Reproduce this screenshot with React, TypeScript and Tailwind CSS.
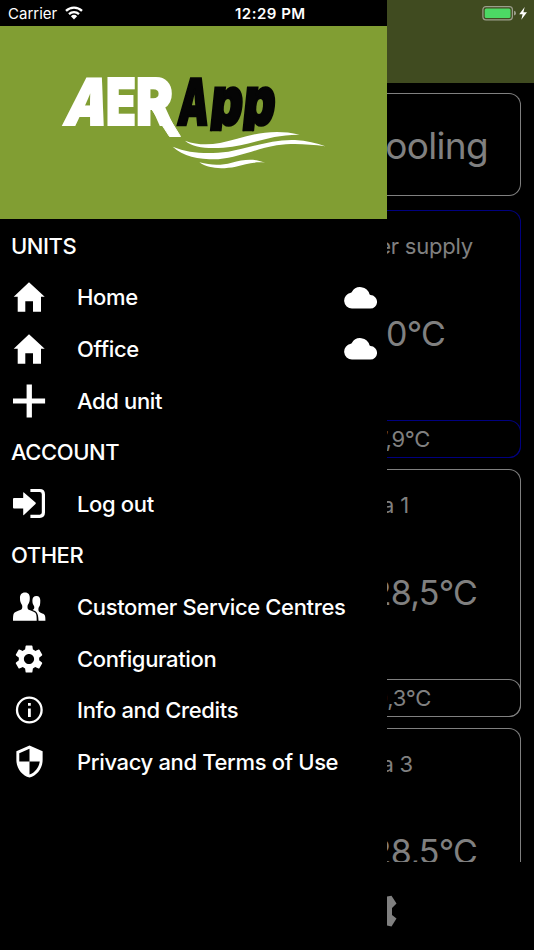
import type { ReactNode } from "react";
import { MdSecurity, MdSettings } from "react-icons/md";

const HomeIcon = () => (
  <svg viewBox="0 0 36 36" className="w-9 h-9" fill="currentColor">
    <path d="M18 3.3 33.7 17.7H30v15.1h-8V22.2h-7.7v10.6H6.7V17.7h-4z" />
  </svg>
);

const PlusIcon = () => (
  <svg viewBox="0 0 36 36" className="w-9 h-9" fill="currentColor">
    <path d="M15.6 1.4h5.3v14h13.2v5.1H20.9v13.9h-5.3V20.5H2v-5.1h13.6z" />
  </svg>
);

const LogoutIcon = () => (
  <svg viewBox="0 0 36 36" className="w-9 h-9" fill="currentColor">
    <path d="M3 11.9h9.2V6.6q0-.8.7-.2l11.6 10.2q.7.7 0 1.4L12.9 29q-.7.5-.7-.3v-6.3H3q-1 0-1-1v-8.5q0-1 1-1z" />
    <path d="M19.4 4.5h9.3q3.7 0 3.7 3.7v18.4q0 3.7-3.7 3.7h-9.3" fill="none" stroke="currentColor" strokeWidth="3.2" />
  </svg>
);

const PeopleIcon = () => (
  <svg viewBox="0 0 36 36" className="w-9 h-9" fill="currentColor">
    <path d="M14 3.5c-3.5 0-5.2 2.4-5 5.7.1 1.8 0 2.3.5 3.8.5 1.7 1.8 2.7 1.8 4.4 0 2-.3 2.9-2 3.7-1.8.8-4.7 1.5-6 2.7C2 25 2 28.5 2 31.7h23.7c0-3.2 0-6.7-1.4-7.9-1.3-1.2-4.2-1.9-6-2.7-1.6-.8-1.8-1.7-1.8-3.7 0-1.7 1.3-2.7 1.8-4.4.5-1.5.4-2 .5-3.8.2-3.3-1.4-5.7-4.8-5.7z" />
    <path d="M25.5 7c-2.8 0-4.2 1.8-4.1 4.6.1 1.5 0 2 .5 3.3.4 1.2 1.4 1.9 1.4 3.3 0 1.5-.6 2.3-1.8 2.8 3.9 1.4 5.7 2.1 6 10.7h6.9c0-2.9 0-5.2-1.2-6.2s-2.7-1.3-4-2c-1.6-.7-1.8-1.7-1.8-3.4 0-1.8 1-2.3 1.5-3.9.3-1.3.4-2.9.4-4.6 0-2.8-1.2-4.6-3.8-4.6z" />
  </svg>
);

const InfoIcon = () => (
  <svg viewBox="0 0 36 36" className="w-9 h-9" fill="currentColor">
    <circle cx="18.3" cy="18" r="12.3" fill="none" stroke="currentColor" strokeWidth="2.3" />
    <path d="M17 11h2.8v2.7H17zM17 16.5h2.8V25H17z" />
  </svg>
);

const CloudIcon = () => (
  <svg viewBox="0 0 33 23" className="w-[33px] h-[23px]" fill="currentColor">
    <path d="M8 22.5h18.2a6.7 6.7 0 0 0 .3-13.4q-.5-.1-1-.8A9.6 9.6 0 0 0 7.8 6q-.3.6-1 .8A7.9 7.9 0 0 0 8 22.5z" />
  </svg>
);

const BrandLogo = () => (
  <svg viewBox="0 26 387 193" className="w-full h-full" fontFamily="Inter, sans-serif" fontWeight={900} fontSize={64}>
    <defs>
      <clipPath id="stems">
        <rect x="170" y="70" width="120" height="61.2" />
      </clipPath>
    </defs>
    <g fill="#fff" stroke="#fff" strokeWidth="2">
      <text transform="translate(62 125.3) skewX(-13.5)" textLength="42" lengthAdjust="spacingAndGlyphs">A</text>
      <text x="106" y="125.3" textLength="30" lengthAdjust="spacingAndGlyphs">E</text>
      <text x="136" y="125.3" textLength="37" lengthAdjust="spacingAndGlyphs">R</text>
      <path d="M151 108h12l17.5 28.500h-11z" strokeWidth="1" />
    </g>
    <g fill="#050505" stroke="#050505" strokeWidth="2.6" clipPath="url(#stems)">
      <text transform="translate(176.5 125) skewX(-5)" textLength="31" lengthAdjust="spacingAndGlyphs">A</text>
      <text transform="translate(209 125) skewX(-6) scale(1 1.06)" textLength="32" lengthAdjust="spacingAndGlyphs">p</text>
      <text transform="translate(241.5 125) skewX(-6) scale(1 1.06)" textLength="32" lengthAdjust="spacingAndGlyphs">p</text>
    </g>
    <g fill="#fff" transform="translate(165 65) scale(.3333)">
      <path d="M60 227C95 240 130 240 165 234C230 222 300 185 404 209C310 208 260 242 175 248C125 251 85 248 60 227z" />
      <path d="M23 245C75 266 130 268 190 260C250 250 320 222 390 225C425 227 455 234 481 244C430 238 385 234 335 241C270 252 225 277 160 283C105 284 55 275 23 245z" />
      <path d="M103 292C140 302 170 301 200 293C235 284 265 279 300 293C265 289 240 299 212 305C170 313 130 311 103 292z" />
    </g>
  </svg>
);

const sections = [
  {
    title: "UNITS",
    items: [
      { label: "Home", icon: <HomeIcon />, cloud: true },
      { label: "Office", icon: <HomeIcon />, cloud: true },
      { label: "Add unit", icon: <PlusIcon /> },
    ],
  },
  {
    title: "ACCOUNT",
    items: [{ label: "Log out", icon: <LogoutIcon /> }],
  },
  {
    title: "OTHER",
    items: [
      { label: "Customer Service Centres", icon: <PeopleIcon /> },
      { label: "Configuration", icon: <MdSettings size={34} /> },
      { label: "Info and Credits", icon: <InfoIcon /> },
      { label: "Privacy and Terms of Use", icon: <MdSecurity size={35} /> },
    ],
  },
];

const MenuItem = ({ label, icon, cloud }: { label: string; icon: ReactNode; cloud?: boolean }) => (
  <li className="flex items-center h-[51.6px] pl-[11px] pr-[10px]">
    <span className="flex items-center justify-center w-9 h-9 mr-[30px] shrink-0">{icon}</span>
    <span className="flex-1 pt-px whitespace-nowrap">{label}</span>
    {cloud && <CloudIcon />}
  </li>
);

const zones = [
  { name: "er supply", temp: "0°C", low: "7,9°C", border: "border-[#000080]", namePad: "pr-[47px]", tempPad: "pr-[75px]", lowPad: "pr-[90px]" },
  { name: "a 1", temp: "28,5°C", low: "0,3°C", border: "border-[#808080]", namePad: "pr-[111px]", tempPad: "pr-[43px]", lowPad: "pr-[89px]" },
  { name: "a 3", temp: "28,5°C", low: "", border: "border-[#808080]", namePad: "pr-[107px]", tempPad: "pr-[43px]", lowPad: "pr-[89px]" },
];

const StatusBar = () => (
  <div className="absolute inset-x-0 top-0 h-[26px] flex items-center text-[15px] text-white">
    <span className="pl-2 pt-[2px] w-[65px]">Carrier</span>
    <svg viewBox="0 0 18 14" className="w-[18px] h-[14px]" fill="none" stroke="currentColor" strokeWidth="2.3">
      <path d="M1 4.9a11.5 11.5 0 0 1 16 0M4 8.1a7.3 7.3 0 0 1 10 0" />
      <path d="M9 13.5 5.9 10.3a4.5 4.5 0 0 1 6.2 0z" fill="currentColor" stroke="none" />
    </svg>
    <span className="ml-[152px] pt-[2px] font-semibold tracking-[0.5px] whitespace-nowrap">12:29 PM</span>
    <svg viewBox="0 0 48 16" className="w-12 h-4 ml-auto mr-1">
      <rect x=".9" y="1.6" width="29.5" height="13.2" rx="3" fill="none" stroke="#9b9f8c" strokeWidth="1.2" />
      <rect x="2.7" y="3.4" width="25.8" height="9.7" rx="1.5" fill="#4cd964" />
      <path d="M32 5.8q2 .5 2 2.4t-2 2.4z" fill="#9b9f8c" />
      <path d="m42.7 2-5.5 7.3h3.4l-1.3 5.4 5.7-7.5h-3.6z" fill="#fff" />
    </svg>
  </div>
);

const App = () => {
  return (
    <div className="relative flex w-[534px] h-[950px] overflow-hidden bg-black font-['Inter',sans-serif]">
      <aside className="w-[387px] shrink-0 pt-[26px] text-white">
        <div className="h-[193px] mb-px bg-[#819e33]">
          <BrandLogo />
        </div>
        <nav className="text-[22px] font-medium tracking-[-0.35px]">
          {sections.map((section) => (
            <section key={section.title}>
              <h2 className="flex items-center h-[51.6px] pl-[11px] pt-px tracking-[-0.45px]">{section.title}</h2>
              <ul>
                {section.items.map((item) => (
                  <MenuItem key={item.label} {...item} />
                ))}
              </ul>
            </section>
          ))}
        </nav>
      </aside>

      <main className="flex flex-col w-[147px] overflow-hidden text-[#808080]">
        <div className="h-[83px] shrink-0 bg-[#404b20]" />
        <div className="flex flex-col h-[779px] shrink-0 pt-[10px] pr-[13px] overflow-hidden whitespace-nowrap">
          <div className="flex items-center justify-end h-[103px] shrink-0 mb-[14px] pt-[3px] pr-[32px] border border-l-0 border-[#808080] rounded-r-xl text-[37px] tracking-[-0.7px]">
            ooling
          </div>
          {zones.map((zone) => (
            <div
              key={zone.name}
              className={`flex flex-col h-[248px] shrink-0 mb-[11px] border border-l-0 rounded-r-xl ${zone.border}`}
            >
              <div className={`flex items-center justify-end h-[70px] text-[22px] tracking-[-0.2px] ${zone.namePad}`}>{zone.name}</div>
              <div className={`flex items-center justify-end h-[104px] text-[34px] tracking-[-0.8px] ${zone.tempPad}`}>{zone.temp}</div>
              <div
                className={`flex items-center justify-end h-[38px] mt-auto -mb-px -mr-px border border-l-0 rounded-r-xl text-[22px] tracking-[-0.3px] ${zone.border} ${zone.lowPad}`}
              >
                {zone.low}
              </div>
            </div>
          ))}
        </div>
        <div className="flex items-center flex-1 pt-[10px]">
          <svg viewBox="0 0 10 32" className="w-[10px] h-8" fill="currentColor">
            <path d="M0 1.5 4.5.8 9.5 8.6 5 13v7l4.5 3.5L4.5 31.5 0 30.5z" />
          </svg>
        </div>
      </main>

      <StatusBar />
    </div>
  );
};

export default App;
